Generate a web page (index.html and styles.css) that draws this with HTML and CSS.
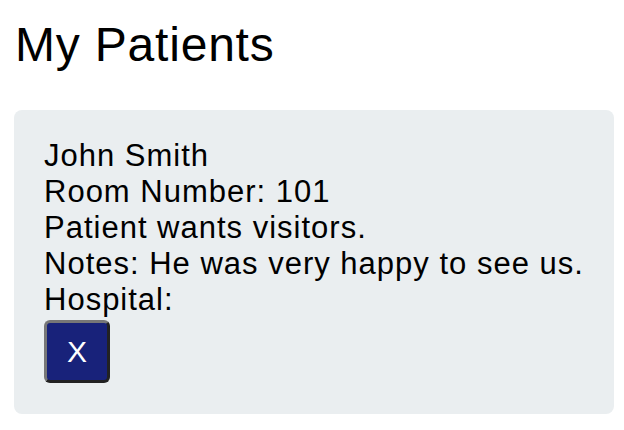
FILE: index.html
```html
<!DOCTYPE html>
<html>
<head>
<meta charset="utf-8">
<link rel="stylesheet" href="styles.css">
</head>
<body>
<h1 class="title">My Patients</h1>
<div class="card">
  <div class="line">John Smith</div>
  <div class="line">Room Number: 101</div>
  <div class="line">Patient wants visitors.</div>
  <div class="line">Notes: He was very happy to see us.</div>
  <div class="line">Hospital: </div>
  <button class="remove">X</button>
</div>
</body>
</html>
```
FILE: styles.css
```css
html, body {
  margin: 0;
  padding: 0;
  background: #fff;
}
body {
  padding: 0 10px 0 14px;
  font-family: "Liberation Sans", Arial, sans-serif;
  color: #000;
}
.title {
  margin: 15px 0 0 1px;
  font-size: 48px;
  font-weight: 400;
  line-height: 60px;
  letter-spacing: 0.8px;
}
.card {
  margin-top: 35px;
  background: #eaeef0;
  border-radius: 8px;
  padding: 28px 30px 31px 30px;
}
.line {
  font-size: 31px;
  line-height: 36px;
  letter-spacing: 1px;
}
.remove {
  display: block;
  margin-top: 2px;
  width: 66px;
  height: 63px;
  background: #18227a;
  color: #fff;
  font-family: "Liberation Sans", sans-serif;
  font-size: 30px;
  border: 3px solid;
  border-color: #777 #222 #222 #777;
  border-radius: 6px;
  padding: 0;
}
```
